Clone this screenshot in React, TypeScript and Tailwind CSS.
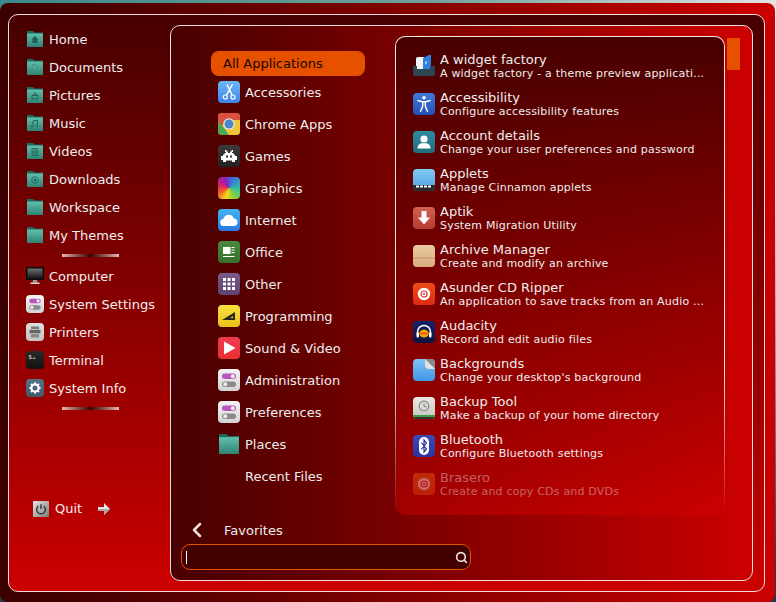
import type { ReactNode } from "react"
import { ChevronLeft, Search } from "lucide-react"

// rounded app tile, gradient comes in through className
function Tile({ className, size = 22, children }: { className: string; size?: number; children?: ReactNode }) {
  return (
    <div
      className={`flex shrink-0 items-center justify-center overflow-hidden rounded-[4px] ${size === 22 ? "h-[22px] w-[22px]" : "h-[18px] w-[18px]"} ${className}`}
    >
      {children}
    </div>
  )
}

function Glyph({ children, vb = 22 }: { children: ReactNode; vb?: number }) {
  return (
    <svg viewBox={`0 0 ${vb} ${vb}`} className="h-full w-full">
      {children}
    </svg>
  )
}

function FolderIcon({ glyph, big }: { glyph?: ReactNode; big?: boolean }) {
  return (
    <svg viewBox="0 0 16 16" className={big ? "h-[20px] w-[20px] shrink-0" : "h-[16px] w-[16px] shrink-0"}>
      <defs>
        <linearGradient id="folderFace" x1="0" y1="0" x2="0" y2="1">
          <stop offset="0" stopColor="#62c0ad" />
          <stop offset="1" stopColor="#2f8274" />
        </linearGradient>
      </defs>
      <path d="M0 0h6l1.500 1.500H16V5H0z" fill="#1f6a60" />
      <path d="M0 2.500h16V16H0z" fill="url(#folderFace)" />
      {glyph}
    </svg>
  )
}

const folderGlyph = "#1d5f55"

const homeGlyph = <path d="M8 5l3.500 3.500h-1V12h-5V8.500h-1z" fill={folderGlyph} />
const docGlyph = <path d="M5.500 5.500h3.500l1.500 1.500v5h-5z" fill="none" stroke="#3f9283" strokeWidth="0.8" />
const picGlyph = <path d="M5 8.500h6V12H5zM8 5.500l2 3H6z" fill="none" stroke={folderGlyph} strokeWidth="0.9" />
const musicGlyph = <path d="M6 11V6l4.500-.8V10.500M6 11a1 1 0 1 1-1.500-.8M10.500 10.500a1 1 0 1 1-1.500-.8" fill="none" stroke={folderGlyph} strokeWidth="1" />
const videoGlyph = <path d="M5 5.500h6v7H5zM5 9h6M7 5.500v7M9 5.500v7" fill="none" stroke={folderGlyph} strokeWidth="0.7" />
const downGlyph = (
  <>
    <circle cx="8" cy="9" r="3.300" fill="none" stroke={folderGlyph} strokeWidth="0.8" />
    <circle cx="8" cy="9" r="1.300" fill={folderGlyph} />
  </>
)

function ToggleIcon({ size = 22 }: { size?: number }) {
  return (
    <Tile size={size} className="bg-linear-to-b from-[#f4f4f4] to-[#d4d4d4]">
      <Glyph>
        <rect x="4" y="4.500" width="14" height="5.500" rx="2.700" fill="#bb55bb" />
        <circle cx="14.800" cy="7.200" r="2" fill="#f2f2f2" />
        <rect x="4" y="12.500" width="14" height="5.500" rx="2.700" fill="#8a8a8a" />
        <circle cx="7.200" cy="15.200" r="2" fill="#eeeeee" />
      </Glyph>
    </Tile>
  )
}

const sidebarPlaces = [
  { name: "Home", glyph: homeGlyph },
  { name: "Documents", glyph: docGlyph },
  { name: "Pictures", glyph: picGlyph },
  { name: "Music", glyph: musicGlyph },
  { name: "Videos", glyph: videoGlyph },
  { name: "Downloads", glyph: downGlyph },
  { name: "Workspace" },
  { name: "My Themes" },
]

const sidebarSystem: { name: string; icon: ReactNode }[] = [
  {
    name: "Computer",
    icon: (
      <svg viewBox="0 0 18 18" className="h-[18px] w-[18px]">
        <defs>
          <linearGradient id="screenFace" x1="0" y1="0" x2="0" y2="1">
            <stop offset="0" stopColor="#707070" />
            <stop offset="1" stopColor="#141414" />
          </linearGradient>
        </defs>
        <rect x="0" y="0" width="18" height="13" fill="#0c0c0c" />
        <rect x="1.500" y="1.500" width="15" height="10" fill="url(#screenFace)" />
        <path d="M7 13h4l.5 2.500h-5z" fill="#9a9a9a" />
        <rect x="4.500" y="15.500" width="9" height="1.500" fill="#dcdcdc" />
      </svg>
    ),
  },
  { name: "System Settings", icon: <ToggleIcon size={18} /> },
  {
    name: "Printers",
    icon: (
      <Tile size={18} className="bg-linear-to-b from-[#dedede] to-[#c4c4c4]">
        <Glyph vb={18}>
          <rect x="5" y="3.500" width="8" height="2.500" fill="#777" />
          <rect x="3.500" y="6.800" width="11" height="3.500" fill="#666" />
          <rect x="5" y="11" width="8" height="3.500" fill="#888" />
        </Glyph>
      </Tile>
    ),
  },
  {
    name: "Terminal",
    icon: (
      <Tile size={18} className="bg-linear-to-b from-[#2a2a2a] to-[#111]">
        <Glyph vb={18}>
          <text x="2.500" y="7.500" fontSize="5.500" fontFamily="Liberation Mono" fill="#eee">
            $
          </text>
          <rect x="6.500" y="6.800" width="3" height="0.800" fill="#eee" />
        </Glyph>
      </Tile>
    ),
  },
  {
    name: "System Info",
    icon: (
      <Tile size={18} className="bg-linear-to-b from-[#567486] to-[#44596a]">
        <Glyph vb={18}>
          <circle cx="9" cy="9" r="3.600" fill="none" stroke="#fff" strokeWidth="2.200" />
          <path d="M9 3.200v2M9 12.800v2M3.200 9h2M12.800 9h2M4.900 4.900l1.400 1.400M11.700 11.700l1.400 1.400M4.900 13.100l1.400-1.400M11.700 6.300l1.400-1.400" stroke="#fff" strokeWidth="1.500" />
        </Glyph>
      </Tile>
    ),
  },
]

const categories: { name: string; icon: ReactNode }[] = [
  {
    name: "Accessories",
    icon: (
      <Tile className="bg-linear-to-b from-[#6fb6f6] to-[#3f85e6]">
        <Glyph>
          <path d="M14.500 3.500L8.500 14M9 3.500l5 10.500" stroke="#fff" strokeWidth="1.500" fill="none" />
          <circle cx="7.300" cy="16" r="2" fill="none" stroke="#fff" strokeWidth="1.200" />
          <circle cx="15" cy="16" r="2" fill="none" stroke="#fff" strokeWidth="1.200" />
        </Glyph>
      </Tile>
    ),
  },
  {
    name: "Chrome Apps",
    icon: (
      <Tile className="bg-[#f0c53a]">
        <Glyph>
          <path d="M0 0h22v7H11L4 13 0 9z" fill="#d9503f" />
          <path d="M0 8l6 7 5 7H0z" fill="#4aa84e" />
          <path d="M11 22l5-8 6-7v15z" fill="#f0c53a" />
          <circle cx="11" cy="11" r="5.800" fill="#e8e8e8" />
          <circle cx="11" cy="11" r="4.500" fill="#4c86c4" />
        </Glyph>
      </Tile>
    ),
  },
  {
    name: "Games",
    icon: (
      <Tile className="bg-linear-to-b from-[#3c3c3c] to-[#222]">
        <Glyph>
          <path
            d="M7 5h1.500v1.500H10V8h2V6.500h1.500V5H15v2h-1v1h1.500v1.500H17V11h2v4h-2v2h-3v-1.500H8V17H5v-2H3v-4h2V9.500h1.500V8H8V7H7zM8 10.500v2h2v-2zM12 10.500v2h2v-2z"
            fill="#fff"
            fillRule="evenodd"
          />
        </Glyph>
      </Tile>
    ),
  },
  {
    name: "Graphics",
    icon: (
      <Tile className="bg-[conic-gradient(from_20deg_at_50%_50%,#3a6fd8,#2fc0a0_20%,#7fd040_35%,#f6d820_50%,#f06020_62%,#d8206a_75%,#8a20c0_88%,#3a6fd8)]" />
    ),
  },
  {
    name: "Internet",
    icon: (
      <Tile className="bg-linear-to-b from-[#45b4f0] to-[#2a76e4]">
        <Glyph>
          <path d="M6 17a3.500 3.500 0 0 1-.6-7A5.500 5.500 0 0 1 16 9.500 3.800 3.800 0 0 1 16.500 17z" fill="#fff" />
        </Glyph>
      </Tile>
    ),
  },
  {
    name: "Office",
    icon: (
      <Tile className="bg-linear-to-b from-[#4a8a3c] to-[#37702c]">
        <Glyph>
          <rect x="5" y="6" width="7.500" height="7" fill="#fff" />
          <path d="M13.500 6.500h3M13.500 9h3M13.500 11.500h3M5 15.500h11.500" stroke="#fff" strokeWidth="1" />
        </Glyph>
      </Tile>
    ),
  },
  {
    name: "Other",
    icon: (
      <Tile className="bg-linear-to-b from-[#7a5a88] to-[#5e4270]">
        <Glyph>
          <path
            d="M5 5h3v3H5zM9.500 5h3v3h-3zM14 5h3v3h-3zM5 9.500h3v3H5zM9.500 9.500h3v3h-3zM14 9.500h3v3h-3zM5 14h3v3H5zM9.500 14h3v3h-3zM14 14h3v3h-3z"
            fill="#fff"
          />
        </Glyph>
      </Tile>
    ),
  },
  {
    name: "Programming",
    icon: (
      <Tile className="bg-linear-to-b from-[#f8e23c] to-[#e8c018]">
        <Glyph>
          <path d="M4 15l13-8v8zM12 13h3v-2z" fill="#2a2a1a" fillRule="evenodd" />
        </Glyph>
      </Tile>
    ),
  },
  {
    name: "Sound & Video",
    icon: (
      <Tile className="bg-linear-to-b from-[#f03c50] to-[#e83030]">
        <Glyph>
          <path d="M6 4.500L17.500 11 6 17.500z" fill="#fff" />
        </Glyph>
      </Tile>
    ),
  },
  { name: "Administration", icon: <ToggleIcon /> },
  { name: "Preferences", icon: <ToggleIcon /> },
  { name: "Places", icon: <div className="flex h-[22px] w-[22px] items-center justify-center"><FolderIcon big /></div> },
  { name: "Recent Files", icon: <div className="h-[22px] w-[22px]" /> },
]

const disc = (
  <>
    <circle cx="11" cy="11" r="6.200" fill="#fff" />
    <circle cx="11" cy="11" r="3" fill="none" stroke="#d8332a" strokeWidth="1.200" />
    <circle cx="11" cy="11" r="1" fill="#d8332a" />
  </>
)

const apps: { name: string; desc: string; icon: ReactNode; faded?: boolean }[] = [
  {
    name: "A widget factory",
    desc: "A widget factory - a theme preview applicati...",
    icon: (
      <svg viewBox="0 0 22 22" className="h-[22px] w-[22px] shrink-0">
        <path d="M3 4q0-2 2-2h6v12H3z" fill="#f2f2f2" />
        <path d="M10 3l6-3h2v16h-8z" fill="#2f7fe0" />
        <path d="M14 6l-2 .6v3l2-.6z" fill="#9ccaf5" />
        <path d="M0 11h4v3h13v-3h5v8q0 2-2 2H2q-2 0-2-2z" fill="#2e4650" />
      </svg>
    ),
  },
  {
    name: "Accessibility",
    desc: "Configure accessibility features",
    icon: (
      <Tile className="bg-linear-to-b from-[#3f78d8] to-[#2350b8]">
        <Glyph>
          <circle cx="11" cy="4.800" r="1.800" fill="#fff" />
          <path d="M4.500 7.500l4.800 1.200h3.400l4.800-1.200M9.700 9v4l-2.400 6M12.300 9v4l2.400 6" fill="none" stroke="#fff" strokeWidth="1.400" />
        </Glyph>
      </Tile>
    ),
  },
  {
    name: "Account details",
    desc: "Change your user preferences and password",
    icon: (
      <Tile className="bg-linear-to-b from-[#2f8aa0] to-[#20707e]">
        <Glyph>
          <circle cx="11" cy="8" r="3.600" fill="#fff" />
          <path d="M4.500 17.500c0-4 3-5.300 4.500-5.300h4c1.500 0 4.500 1.300 4.500 5.300z" fill="#fff" />
        </Glyph>
      </Tile>
    ),
  },
  {
    name: "Applets",
    desc: "Manage Cinnamon applets",
    icon: (
      <Tile className="bg-linear-to-b from-[#7fcaf2] to-[#4ea0e2]">
        <Glyph>
          <rect x="0" y="16" width="22" height="6" fill="#2a2a30" />
          <path d="M3 16.500h3v2H3zM7 16.500h3v2H7zM11 16.500h3v2h-3zM15 16.500h3v2h-3z" fill="#fff" />
        </Glyph>
      </Tile>
    ),
  },
  {
    name: "Aptik",
    desc: "System Migration Utility",
    icon: (
      <Tile className="bg-linear-to-b from-[#d0604e] to-[#b83c34]">
        <Glyph>
          <path d="M8.500 4h5v6.500H17L11 17.500 5 10.500h3.500z" fill="#fff" />
        </Glyph>
      </Tile>
    ),
  },
  {
    name: "Archive Manager",
    desc: "Create and modify an archive",
    icon: (
      <Tile className="bg-linear-to-b from-[#ecc9a0] to-[#d8ad7e]">
        <Glyph>
          <path d="M0 13h22" stroke="#b88c60" strokeWidth="0.800" />
        </Glyph>
      </Tile>
    ),
  },
  {
    name: "Asunder CD Ripper",
    desc: "An application to save tracks from an Audio ...",
    icon: (
      <Tile className="bg-linear-to-b from-[#f04a18] to-[#dc2a10]">
        <Glyph>{disc}</Glyph>
      </Tile>
    ),
  },
  {
    name: "Audacity",
    desc: "Record and edit audio files",
    icon: (
      <Tile className="bg-linear-to-b from-[#14246a] to-[#101440]">
        <Glyph>
          <path d="M4.500 14v-3a6.500 6.500 0 0 1 13 0v3" fill="none" stroke="#fff" strokeWidth="1.500" />
          <path d="M6 12.500c1-3 3-4 5-4s4 1 5 4c-1 3-3 4-5 4s-4-1-5-4z" fill="#f5a800" />
          <path d="M7 12.500h8" stroke="#e8431a" strokeWidth="1.500" />
          <rect x="3.500" y="11.500" width="2.500" height="5" rx="1" fill="#fff" />
          <rect x="16" y="11.500" width="2.500" height="5" rx="1" fill="#fff" />
        </Glyph>
      </Tile>
    ),
  },
  {
    name: "Backgrounds",
    desc: "Change your desktop's background",
    icon: (
      <Tile className="bg-linear-to-b from-[#7cc4f2] to-[#3f96e6]">
        <Glyph>
          <path d="M12 0h10v10z" fill="#8a8a8a" />
          <path d="M12 0v6a4 4 0 0 0 4 4h6z" fill="#e2e2e2" />
        </Glyph>
      </Tile>
    ),
  },
  {
    name: "Backup Tool",
    desc: "Make a backup of your home directory",
    icon: (
      <Tile className="bg-linear-to-b from-[#e8e8e4] to-[#c4c8c0]">
        <Glyph>
          <circle cx="11" cy="9" r="4.800" fill="none" stroke="#888" strokeWidth="1.200" />
          <path d="M11 6.200V9l2.300 1.200" fill="none" stroke="#888" strokeWidth="1.100" />
          <rect x="0" y="18" width="22" height="2" fill="#3f9a46" />
          <rect x="0" y="20" width="22" height="2" fill="#333" />
        </Glyph>
      </Tile>
    ),
  },
  {
    name: "Bluetooth",
    desc: "Configure Bluetooth settings",
    icon: (
      <Tile className="bg-linear-to-b from-[#3e48b4] to-[#2c349c]">
        <Glyph>
          <rect x="6" y="2" width="10" height="18" rx="5" fill="#fff" />
          <path d="M8.300 7.500l5.200 6.500-2.500 3V5l2.500 3-5.200 6.500" fill="none" stroke="#2c349c" strokeWidth="1.200" />
        </Glyph>
      </Tile>
    ),
  },
  {
    name: "Brasero",
    desc: "Create and copy CDs and DVDs",
    faded: true,
    icon: (
      <Tile className="bg-linear-to-b from-[#f07018] to-[#e05410]">
        <Glyph>{disc}</Glyph>
      </Tile>
    ),
  },
]

function Separator() {
  return <div className="ml-[53px] h-[3px] w-[57px] bg-linear-to-r from-[#e8b8b8] via-[#3c0000] to-[#e8b8b8]" />
}

function SideRow({ name, icon }: { name: string; icon: ReactNode }) {
  return (
    <div className="ml-[17px] flex h-[28px] items-center gap-[5px]">
      <div className="flex w-[18px] justify-center">{icon}</div>
      <span className="pt-[2px]">{name}</span>
    </div>
  )
}

export default function App() {
  return (
    <div className="flex h-[602px] w-[776px] flex-col overflow-hidden bg-[linear-gradient(to_bottom,transparent_30%,#2c3444_95%),linear-gradient(to_right,#3d8a8c,#6fa09a_55%,#e4e4e4)] font-['DejaVu_Sans',sans-serif] text-[13px] text-[#eeeeee]">
      <div className="mt-[3px] h-[599px] w-[775px] rounded-[8px] bg-linear-to-r from-[#3a0000] to-[#cc0000] pt-[11px] pl-[8px]">
        <div className="flex h-[578px] w-[757px] rounded-[10px] border border-[#f0dcdc] bg-linear-to-b from-[#480000] to-[#cc0000]">
          {/* left sidebar */}
          <div className="flex w-[161px] shrink-0 flex-col pt-[10px]">
            {sidebarPlaces.map((p) => (
              <SideRow key={p.name} name={p.name} icon={<FolderIcon glyph={p.glyph} />} />
            ))}
            <div className="mt-[5px]">
              <Separator />
            </div>
            <div className="mt-[5px]">
              {sidebarSystem.map((s) => (
                <SideRow key={s.name} name={s.name} icon={s.icon} />
              ))}
            </div>
            <div className="mt-[5px]">
              <Separator />
            </div>
            <div className="mt-[85px] ml-[24px] flex h-[28px] items-center">
              <div className="flex h-[16px] w-[16px] items-center justify-center rounded-[1px] bg-linear-to-br from-[#e8e8e8] to-[#7c7c7c]">
                <svg viewBox="0 0 16 16" className="h-[14px] w-[14px]">
                  <path d="M5 4.500a5 5 0 1 0 6 0" fill="none" stroke="#333" strokeWidth="1.600" />
                  <path d="M8 2.500V8" stroke="#333" strokeWidth="1.600" />
                </svg>
              </div>
              <span className="ml-[6px]">Quit</span>
              <svg viewBox="0 0 12 12" className="ml-[16px] h-[12px] w-[12px]">
                <path d="M0 4h6V0l6 6-6 6V8H0z" fill="#e4e4e4" />
                <path d="M0 6h12l-6 6V8H0z" fill="#a8a8a8" />
              </svg>
            </div>
          </div>

          {/* main box */}
          <div className="mt-[10px] flex h-[556px] w-[583px] flex-col rounded-[10px] border border-[#f0dcdc] bg-linear-to-r from-[#480000] to-[#cc0000]">
            <div className="flex h-[490px] shrink-0">
              <div className="w-[224px] shrink-0 pt-[25px]">
                <div className="ml-[40px] flex h-[25px] w-[154px] items-center rounded-[8px] bg-[#e65100] pl-[12px] text-[#1a0500]">
                  All Applications
                </div>
                {categories.map((c) => (
                  <div key={c.name} className="ml-[47px] flex h-[32px] items-center gap-[5px]">
                    {c.icon}
                    <span className="pt-[2px]">{c.name}</span>
                  </div>
                ))}
              </div>

              {/* app list, border fades out toward the bottom */}
              <div className="mt-[10px] h-[480px] w-[330px] shrink-0 rounded-[10px] bg-linear-to-b from-[#f4e4e4] via-[#f4e4e4] via-70% to-transparent p-px">
                <div className="h-full rounded-[9px] bg-[linear-gradient(to_bottom,#480000,transparent),linear-gradient(to_right,#a40000,#cc0000)] pt-[10px] pl-[17px]">
                  {apps.map((a) => (
                    <div key={a.name} className={`flex h-[38px] items-center gap-[5px] ${a.faded ? "opacity-40" : ""}`}>
                      {a.icon}
                      <div className="w-[280px] pt-[2px] leading-[14px] whitespace-nowrap">
                        <div>{a.name}</div>
                        <div className="text-[11px] tracking-[0.2px]">{a.desc}</div>
                      </div>
                    </div>
                  ))}
                </div>
              </div>

              <div className="mt-[12px] ml-[2px] h-[32px] w-[13px] bg-[#e65100]" />
            </div>

            <div className="ml-[14px] flex h-[28px] shrink-0 items-center">
              <ChevronLeft size={24} strokeWidth={2.5} className="text-[#f0e0e0]" />
              <span className="ml-[15px] pt-[2px]">Favorites</span>
            </div>
            <div className="ml-[10px] flex h-[26px] w-[290px] shrink-0 items-center justify-between rounded-[9px] border border-[#e65100] bg-[#420000] pr-[2px] pl-[4px]">
              <div className="h-[13px] w-px bg-white" />
              <Search size={13} strokeWidth={3} className="text-[#f0e0e0]" />
            </div>
          </div>
        </div>
      </div>
    </div>
  )
}
